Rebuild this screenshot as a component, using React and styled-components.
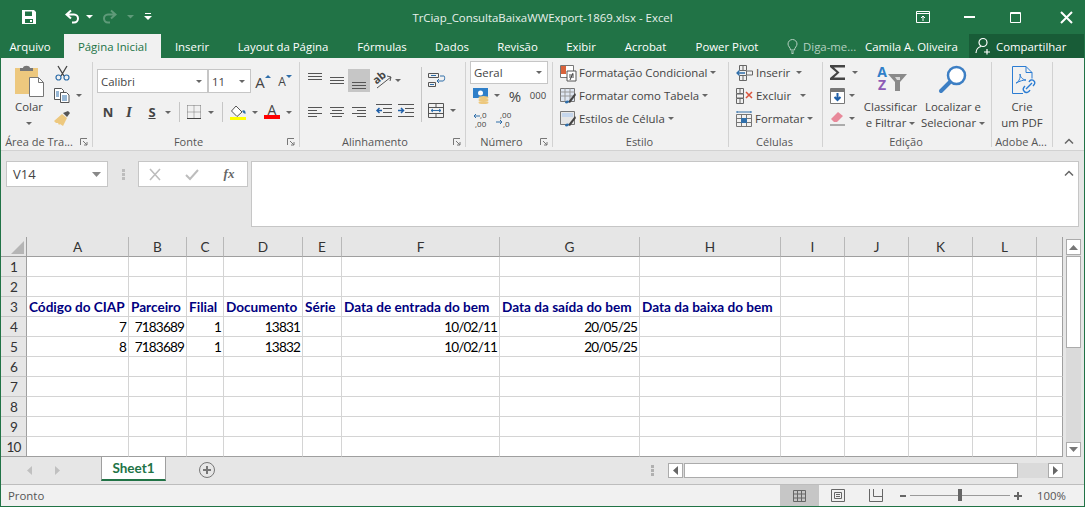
import React from "react";
import styled, { createGlobalStyle } from "styled-components";

const UI_FONT = `"Open Sans", "Noto Sans", sans-serif`;
const CELL_FONT = `Lato, "Liberation Sans", sans-serif`;
const GREEN = "#217346";

const GlobalStyle = createGlobalStyle`
  html, body { margin: 0; padding: 0; background: #fff; }
  body { font-family: ${UI_FONT}; font-size: 11.4px; color: #444; }
  svg { display: block; flex: none; overflow: visible; }
`;

const Window = styled.div`
  width: 1085px;
  height: 507px;
  box-sizing: border-box;
  border: 1px solid ${GREEN};
  border-top: none;
  display: flex;
  flex-direction: column;
  overflow: hidden;
  background: #e6e6e6;
`;

/* title bar */
const TitleBar = styled.div`
  height: 34px;
  flex: none;
  background: ${GREEN};
  display: grid;
  grid-template-columns: 1fr auto 1fr;
  align-items: center;
  color: #fff;
`;
const QuickAccess = styled.div`
  display: flex;
  align-items: center;
  padding-left: 20px;
`;
const TitleTool = styled.div`
  width: ${(p) => p.$w}px;
  margin-left: ${(p) => p.$ml || 0}px;
  display: flex;
  justify-content: center;
`;
const WindowTitle = styled.div`
  color: #e8f1ec;
`;
const WindowControls = styled.div`
  display: flex;
  justify-content: flex-end;
  align-items: center;
`;
const ControlButton = styled.div`
  width: 46px;
  box-sizing: border-box;
  padding-left: ${(p) => p.$pl || 0}px;
  display: flex;
  justify-content: center;
`;

/* tabs */
const TabBar = styled.div`
  height: 24px;
  flex: none;
  background: ${GREEN};
  display: flex;
  align-items: stretch;
  color: #fff;
`;
const Tab = styled.div`
  width: ${(p) => p.$w}px;
  box-sizing: border-box;
  padding-right: ${(p) => p.$pr || 0}px;
  display: flex;
  align-items: center;
  justify-content: center;
  white-space: nowrap;
  background: ${(p) => (p.$active ? "#f1f1f1" : "transparent")};
  color: ${(p) => (p.$active ? GREEN : "#fff")};
`;
const TellMe = styled.div`
  width: 92px;
  box-sizing: border-box;
  display: flex;
  align-items: center;
  gap: 5px;
  padding-left: 14px;
  color: #b5d0c1;
  white-space: nowrap;
`;
const UserName = styled.div`
  width: 104px;
  display: flex;
  align-items: center;
  white-space: nowrap;
`;
const ShareButton = styled.div`
  flex: 1;
  background: #185c37;
  display: flex;
  align-items: center;
  gap: 4px;
  padding-left: 6px;
`;

/* ribbon */
const Ribbon = styled.div`
  height: 93px;
  flex: none;
  box-sizing: border-box;
  background: #f1f1f1;
  border-bottom: 1px solid #d2d2d2;
  display: flex;
  padding-top: 2px;
`;
const Group = styled.div`
  position: relative;
  width: ${(p) => p.$w}px;
  flex: none;
  display: flex;
  flex-direction: column;
  &::after {
    content: "";
    position: absolute;
    top: 2px;
    bottom: 3px;
    right: 0;
    width: 1px;
    background: #d2d2d2;
  }
`;
const GroupBody = styled.div`
  height: 74px;
  flex: none;
  box-sizing: border-box;
  padding: 1px 0 0 ${(p) => p.$pl || 0}px;
  display: flex;
`;
const GroupLabel = styled.div`
  height: 12px;
  line-height: 16px;
  display: flex;
  color: #555;
  font-size: 11px;
`;
const LabelText = styled.div`
  flex: 1;
  padding-right: 3px;
  text-align: center;
  white-space: nowrap;
`;
const Launcher = styled.div`
  width: 9px;
  margin: 4px 4px 0 0;
`;
const Stack = styled.div`
  display: flex;
  flex-direction: column;
  padding-top: ${(p) => p.$pt || 0}px;
`;
const Row = styled.div`
  height: ${(p) => p.$h || 23}px;
  margin-top: ${(p) => p.$mt || 0}px;
  display: flex;
  align-items: center;
  gap: ${(p) => p.$gap || 0}px;
  white-space: nowrap;
  color: #444;
`;
const Tool = styled.div`
  width: ${(p) => p.$w}px;
  height: ${(p) => p.$h || 22}px;
  flex: none;
  display: flex;
  align-items: center;
  justify-content: center;
  background: ${(p) => (p.$active ? "#c6c6c6" : "transparent")};
  color: #444;
`;
const Caret = styled.span`
  flex: none;
  display: block;
  width: 0;
  height: 0;
  margin-left: ${(p) => p.$ml || 0}px;
  margin-right: ${(p) => p.$mr || 0}px;
  border-left: 3px solid transparent;
  border-right: 3px solid transparent;
  border-top: 3px solid #666;
`;
const VSep = styled.div`
  width: 1px;
  height: ${(p) => p.$h}px;
  flex: none;
  margin: ${(p) => p.$mt || 0}px ${(p) => p.$mr || 0}px 0 ${(p) => p.$ml || 0}px;
  background: #c6c6c6;
`;
const ComboBox = styled.div`
  width: ${(p) => p.$w}px;
  height: ${(p) => p.$h}px;
  flex: none;
  box-sizing: border-box;
  margin-left: ${(p) => p.$ml || 0}px;
  background: #fff;
  border: 1px solid #c6c6c6;
  display: flex;
  align-items: center;
  justify-content: space-between;
  padding: 0 5px 0 3px;
  color: #444;
`;
const BigButton = styled.div`
  width: ${(p) => p.$w}px;
  flex: none;
  margin-left: ${(p) => p.$ml || 0}px;
  display: flex;
  flex-direction: column;
  align-items: center;
  padding-top: ${(p) => p.$pt || 4}px;
  color: #444;
`;
const BigIcon = styled.div`
  height: ${(p) => p.$h}px;
  padding-left: ${(p) => p.$pl || 0}px;
  display: flex;
  justify-content: center;
`;
const BigText = styled.div`
  height: 16px;
  line-height: 16px;
  display: flex;
  align-items: center;
  white-space: nowrap;
`;
const Collapse = styled.div`
  flex: 1;
  display: flex;
  justify-content: center;
  align-items: flex-start;
  padding-top: 78px;
`;
const SmallDigits = styled.span`
  font-size: 9.5px;
`;
const BoldGlyph = styled.span`
  font-size: 13px;
  font-weight: 700;
  text-decoration: ${(p) => (p.$under ? "underline" : "none")};
`;
const ItalicGlyph = styled.span`
  font-family: "Liberation Serif", serif;
  font-style: italic;
  font-weight: 700;
  font-size: 15px;
`;
const Percent = styled.span`
  font-size: 15px;
`;
const SizeGlyph = styled.span`
  font-size: ${(p) => p.$size}px;
  line-height: 14px;
  margin-top: 2px;
  color: #444;
`;
const SizeArrow = styled.span`
  flex: none;
  align-self: flex-start;
  margin-top: 5px;
  width: 0;
  height: 0;
  border-left: 3px solid transparent;
  border-right: 3px solid transparent;
  border-top: ${(p) => (p.$down ? "3px solid #2f6ea9" : "none")};
  border-bottom: ${(p) => (p.$down ? "none" : "3px solid #2f6ea9")};
`;
const ColorGlyph = styled.div`
  width: 16px;
  display: flex;
  flex-direction: column;
  align-items: center;
  font-size: 14px;
  line-height: 10px;
  color: #444;
  &::after {
    content: "";
    display: block;
    width: 16px;
    height: 4px;
    background: ${(p) => p.$color};
  }
`;
const SortLetters = styled.div`
  display: flex;
  flex-direction: column;
  align-items: center;
  width: 11px;
  font-size: 14px;
  font-weight: 700;
  line-height: 13px;
`;
const SortLetter = styled.span`
  color: ${(p) => p.$color};
`;

/* formula bar */
const FormulaBar = styled.div`
  height: 86px;
  flex: none;
  box-sizing: border-box;
  padding: 10px 5px 0 5px;
  display: flex;
  align-items: flex-start;
  background: #e6e6e6;
`;
const NameBox = styled.div`
  width: 102px;
  height: 26px;
  box-sizing: border-box;
  background: #fff;
  border: 1px solid #c6c6c6;
  display: flex;
  align-items: center;
  justify-content: space-between;
  padding: 0 6px 0 6px;
  font-size: 13px;
  color: #444;
`;
const Grip = styled.div`
  width: 30px;
  height: 26px;
  display: flex;
  align-items: center;
  justify-content: center;
`;
const FormulaButtons = styled.div`
  width: 110px;
  height: 26px;
  box-sizing: border-box;
  background: #fff;
  border: 1px solid #c6c6c6;
  display: flex;
  align-items: center;
  padding-left: 9px;
  gap: 23px;
`;
const FxGlyph = styled.span`
  font-family: "Liberation Serif", serif;
  font-style: italic;
  font-weight: 700;
  font-size: 13px;
  color: #666;
`;
const FormulaInput = styled.div`
  width: 828px;
  height: 66px;
  margin-left: 3px;
  box-sizing: border-box;
  background: #fff;
  border: 1px solid #c6c6c6;
  display: flex;
  justify-content: flex-end;
  padding: 8px 4px 0 0;
`;

/* sheet */
const SheetArea = styled.div`
  height: 220px;
  flex: none;
  display: flex;
`;
const Grid = styled.div`
  display: grid;
  grid-template-columns: 26px 102px 58px 37px 79px 39px 158px 140px 141px 64px 64px 64px 64px 26px;
  grid-auto-rows: 20px;
  background: #fff;
  font-family: ${CELL_FONT};
  font-size: 13.6px;
`;
const Corner = styled.div`
  box-sizing: border-box;
  background: #e6e6e6;
  border-right: 1px solid #9f9f9f;
  border-bottom: 1px solid #9f9f9f;
  display: flex;
  align-items: flex-end;
  justify-content: flex-end;
  padding: 0 2px 2px 0;
`;
const ColHead = styled.div`
  box-sizing: border-box;
  background: #e6e6e6;
  border-right: 1px solid ${(p) => (p.$last ? "#9f9f9f" : "#b8b8b8")};
  border-bottom: 1px solid #9f9f9f;
  display: flex;
  align-items: center;
  justify-content: center;
  color: #333;
`;
const RowHead = styled.div`
  box-sizing: border-box;
  background: #e6e6e6;
  border-right: 1px solid #9f9f9f;
  border-bottom: 1px solid ${(p) => (p.$last ? "#9f9f9f" : "#c6c6c6")};
  display: flex;
  align-items: center;
  justify-content: center;
  letter-spacing: -0.8px;
  color: #333;
`;
const Cell = styled.div`
  box-sizing: border-box;
  border-right: 1px solid ${(p) => (p.$lastCol ? "#9f9f9f" : "#d4d4d4")};
  border-bottom: 1px solid ${(p) => (p.$lastRow ? "#9f9f9f" : "#d4d4d4")};
  display: flex;
  align-items: center;
  justify-content: ${(p) => (p.$right ? "flex-end" : "flex-start")};
  padding: 0 2px;
  white-space: nowrap;
  letter-spacing: ${(p) => (p.$right ? "-0.85px" : "0")};
  color: ${(p) => (p.$head ? "#000080" : "#000")};
  font-weight: ${(p) => (p.$head ? 700 : 400)};
`;
const VScroll = styled.div`
  width: 21px;
  flex: none;
  box-sizing: border-box;
  padding: 2px 3px 0 3px;
  display: flex;
  flex-direction: column;
  background: #e6e6e6;
`;
const VTrack = styled.div`
  width: 15px;
  flex: 1;
  display: flex;
  flex-direction: column;
  background: #dadada;
`;
const ScrollBtn = styled.div`
  height: ${(p) => p.$h}px;
  flex: none;
  box-sizing: border-box;
  background: #fff;
  border: 1px solid #ababab;
  display: flex;
  align-items: center;
  justify-content: center;
`;
const VThumb = styled.div`
  height: 92px;
  box-sizing: border-box;
  background: #fff;
  border: 1px solid #ababab;
  margin-top: 1px;
`;
const Spacer = styled.div`
  flex: 1;
`;

/* sheet tabs */
const SheetTabs = styled.div`
  height: 28px;
  flex: none;
  box-sizing: border-box;
  border-bottom: 1px solid #bdbdbd;
  display: flex;
  align-items: flex-start;
  background: #e6e6e6;
`;
const TabNav = styled.div`
  width: 100px;
  height: 27px;
  box-sizing: border-box;
  padding-left: 26px;
  display: flex;
  align-items: center;
  gap: 23px;
`;
const SheetTab = styled.div`
  width: 65px;
  height: 24px;
  box-sizing: border-box;
  background: #fff;
  border-left: 1px solid #9f9f9f;
  border-right: 1px solid #9f9f9f;
  border-bottom: 2px solid ${GREEN};
  display: flex;
  align-items: center;
  justify-content: center;
  color: ${GREEN};
  font-weight: 700;
  font-family: ${CELL_FONT};
  font-size: 13.5px;
`;
const AddSheet = styled.div`
  margin: 5px 0 0 33px;
`;
const ScrollGrip = styled.div`
  margin: 8px 14px 0 auto;
`;
const HScroll = styled.div`
  width: 395px;
  height: 15px;
  margin: 6px 21px 0 0;
  display: flex;
  background: #dadada;
`;
const HBtn = styled.div`
  width: 15px;
  flex: none;
  box-sizing: border-box;
  background: #fff;
  border: 1px solid #ababab;
  display: flex;
  align-items: center;
  justify-content: center;
`;
const HThumb = styled.div`
  width: 334px;
  box-sizing: border-box;
  background: #fff;
  border: 1px solid #ababab;
  margin-left: 1px;
`;

/* status bar */
const StatusBar = styled.div`
  flex: 1;
  background: #f1f1f1;
  display: flex;
  align-items: stretch;
  padding-left: 7px;
  color: #555;
`;
const StatusText = styled.div`
  flex: 1;
  display: flex;
  align-items: center;
`;
const ViewBtn = styled.div`
  width: ${(p) => p.$w}px;
  display: flex;
  align-items: center;
  justify-content: center;
  background: ${(p) => (p.$active ? "#c6c6c6" : "transparent")};
`;
const ZoomControl = styled.div`
  width: 135px;
  display: flex;
  align-items: center;
  padding-left: 4px;
  box-sizing: border-box;
`;
const ZoomTrack = styled.div`
  position: relative;
  width: 100px;
  height: 1px;
  margin: 0 4px 0 3px;
  background: #9a9a9a;
`;
const ZoomThumb = styled.div`
  position: absolute;
  left: 48px;
  top: -6px;
  width: 4px;
  height: 12px;
  background: #666;
`;
const ZoomLevel = styled.div`
  width: 54px;
  display: flex;
  align-items: center;
  padding-left: 7px;
  box-sizing: border-box;
`;

/* icons */
const TitleCaret = ({ dim }) => (
  <svg width="7" height="4" viewBox="0 0 7 4"><path d="M0 0h7L3.500 3.500z" fill={dim ? "#5f9a79" : "#fff"} /></svg>
);
const SaveIcon = () => (
  <svg width="16" height="16" viewBox="0 0 16 16"><path fillRule="evenodd" fill="#fff" d="M1 1h12l2 2v12H1zM4 2.500V7h7V2.500zM4 10v4h8v-4zM9 11h2v2H9z" /></svg>
);
const UndoIcon = ({ dim }) => (
  <svg width="16" height="16" viewBox="0 0 16 16" fill="none" stroke={dim ? "#5f9a79" : "#fff"} strokeWidth="2">
    {dim ? <path d="M9 1.500l4.500 4L9 9.500M13 5.500H6C3.500 5.500 2 7.500 2 9.500s1.500 4 4 4h2" /> : <path d="M7 1.500l-4.500 4L7 9.500M3 5.500h7c2.500 0 4 2 4 4s-1.500 4-4 4H8" />}
  </svg>
);
const CustomizeIcon = () => (
  <svg width="8" height="8" viewBox="0 0 8 8" fill="#fff"><path d="M1 0h6v1H1zM0 3h8L4 7z" /></svg>
);
const RibbonDisplayIcon = () => (
  <svg width="14" height="12" viewBox="0 0 14 12" fill="none" stroke="#fff"><path d="M.5.500h13v11H.5zM.5 2.500h13M7 10V5M5 7l2-2 2 2" /></svg>
);
const MinIcon = () => <svg width="11" height="2" viewBox="0 0 11 2"><path d="M0 0h11v2H0z" fill="#fff" /></svg>;
const MaxIcon = () => (
  <svg width="11" height="11" viewBox="0 0 11 11" fill="none" stroke="#fff"><path d="M.5.500h10v10H.5zM.5 1.500h10" /></svg>
);
const CloseIcon = () => (
  <svg width="13" height="13" viewBox="0 0 13 13" stroke="#fff" strokeWidth="2"><path d="M1 1l11 11M12 1L1 12" /></svg>
);
const BulbIcon = () => (
  <svg width="11" height="15" viewBox="0 0 11 15" fill="none" stroke="#b5d0c1"><path d="M3.500 11C3.500 8.500 1 7.500 1 5a4.500 4.500 0 019 0c0 2.500-2.500 3.500-2.500 6zM4 13h3M4.500 14.500h2" /></svg>
);
const ShareIcon = () => (
  <svg width="17" height="18" viewBox="0 0 17 18" fill="none" stroke="#fff" strokeWidth="1.200"><circle cx="8" cy="5.500" r="4" /><path d="M1 16c0-3.500 2.500-6 5-6.500M12 12v5.500M9 15h6" /></svg>
);

const PasteIcon = () => (
  <svg width="29" height="32" viewBox="0 0 29 32">
    <path d="M0 3h23v26H0z" fill="#edc87e" />
    <path d="M5 3h3c0-3 7-3 7 0h3v3H5z" fill="#777" />
    <path d="M14.500 12.500h9l5 5v14h-14z" fill="#fff" stroke="#777" />
    <path d="M23.500 12.500v5h5" fill="none" stroke="#777" />
  </svg>
);
const ScissorsIcon = () => (
  <svg width="15" height="16" viewBox="0 0 15 16" fill="none">
    <path d="M3 1l6 10M12 1L6 11" stroke="#444" strokeWidth="1.300" />
    <circle cx="3.500" cy="12.500" r="2.500" stroke="#2f6ea9" strokeWidth="1.200" />
    <circle cx="11.500" cy="12.500" r="2.500" stroke="#2f6ea9" strokeWidth="1.200" />
  </svg>
);
const CopyIcon = () => (
  <svg width="16" height="15" viewBox="0 0 16 15" fill="#fff" stroke="#555">
    <path d="M.5.500h7l2 2v9h-9z" />
    <path d="M6.500 4.500h6l2.500 2.500v7.500H6.500z" />
    <path d="M8 8h5M8 10h5M8 12h5" stroke="#2f6ea9" fill="none" />
    <path d="M2 4h3M2 6h3M2 8h3" stroke="#2f6ea9" fill="none" />
  </svg>
);
const BrushIcon = () => (
  <svg width="16" height="15" viewBox="0 0 16 15">
    <path d="M9 2l5-2 2 2-3 4z" fill="#555" />
    <path d="M0 10l8-7 5 4-4 8-3-2-1 1-1-2-2 0z" fill="#edc87e" />
  </svg>
);
const BorderIcon = () => (
  <svg width="14" height="14" viewBox="0 0 14 14" fill="none" stroke="#777" strokeDasharray="1 1"><path d="M.5.500h13M.5 7h13M.5.500v13M7 .5v13M13.500.5v13" /><path d="M0 13.500h14" stroke="#444" strokeDasharray="none" /></svg>
);
const FillIcon = () => (
  <svg width="16" height="15" viewBox="0 0 16 15">
    <path d="M6 1l6 6-5 4.500L1.500 6z" fill="#fff" stroke="#555" />
    <path d="M12 6c2-2 4 0 3.500 3l-2-1z" fill="#2f6ea9" />
    <path d="M0 12h16v3H0z" fill="#ffff00" />
  </svg>
);
const Lines = ({ rows, w = 14 }) => (
  <svg width={w} height="16" viewBox={`0 0 ${w} 16`} stroke="#555">
    <path d={rows} fill="none" />
  </svg>
);
const OrientIcon = () => (
  <svg width="18" height="17" viewBox="0 0 18 17" fill="none" stroke="#555"><path d="M3 16L17 5M13 4l4 1-1 4" /><text x="0" y="10" fontSize="11" fontWeight="700" fontFamily="Open Sans" fill="#444" stroke="none" transform="rotate(-40 5 8)">ab</text></svg>
);
const WrapIcon = () => (
  <svg width="18" height="15" viewBox="0 0 18 15" fill="none" stroke="#555"><path d="M.5.500h10v4H.5zM.5 9.500h7v4h-7z" /><path d="M3 2.500h5M2 11.500h4" stroke="#2f6ea9" /><path d="M12 3h4c1 0 1 5-1 5H9M11 6L9 8l2 2" stroke="#2f6ea9" /></svg>
);
const MergeIcon = () => (
  <svg width="16" height="15" viewBox="0 0 16 15" fill="#fff" stroke="#555"><path d="M.5.500h15v14H.5z" fill="none" /><path d="M.5 4.500h15M.5 10.500h15M8 .5v4M8 10.500v4" fill="none" /><path d="M3 7.500h10M3 7.500l2-1.500M3 7.500l2 1.500M13 7.500L11 6M13 7.500l-2 1.500" stroke="#2f6ea9" fill="none" /></svg>
);
const IndentIcon = ({ out }) => (
  <svg width="16" height="13" viewBox="0 0 16 13" fill="none" stroke="#555">
    <path d="M0 .5h16M7 4.500h9M7 8.500h9M0 12.500h16" />
    <path d={out ? "M6 6.500H1M3.500 4L1 6.500 3.500 9" : "M0 6.500h5M3 4l2.500 2.500L3 9"} stroke="#1f5fa8" strokeWidth="1.500" />
  </svg>
);
const CurrencyIcon = () => (
  <svg width="16" height="16" viewBox="0 0 16 16">
    <path d="M0 0h15v10H0z" fill="#2f7fc9" />
    <circle cx="7.500" cy="5" r="2.500" fill="#fff" />
    <ellipse cx="10.500" cy="9.500" rx="5" ry="1.500" fill="#edc87e" />
    <ellipse cx="10.500" cy="12" rx="5" ry="1.500" fill="#edc87e" />
    <ellipse cx="10.500" cy="14.500" rx="5" ry="1.500" fill="#edc87e" />
  </svg>
);
const DecimalIcon = ({ dec }) => (
  <svg width="15" height="16" viewBox="0 0 15 16" fontFamily="Open Sans" fontSize="8" fill="#444">
    <text x={dec ? 4 : 7} y="6">{dec ? ",00" : ",0"}</text>
    <text x={dec ? 7 : 2} y="15">{dec ? ",0" : ",00"}</text>
    <path d={dec ? "M0 10h6M4 8l2 2-2 2" : "M7 4H1M3 2L1 4l2 2"} stroke="#2f6ea9" fill="none" />
  </svg>
);
const CondFormatIcon = () => (
  <svg width="16" height="16" viewBox="0 0 16 16">
    <path d="M.5.500h13v12H.5z" fill="#fff" stroke="#777" />
    <path d="M1 1h5v4H1zM1 5h5v4H1z" fill="#d9633b" />
    <path d="M7 6h9v10H7z" fill="#fff" stroke="#555" />
    <path d="M9 10h5M9 12h5M13 8l-3 7" stroke="#444" />
  </svg>
);
const TableFormatIcon = () => (
  <svg width="16" height="16" viewBox="0 0 16 16">
    <path d="M.5.500h14v13H.5z" fill="#dfe7f2" stroke="#777" />
    <path d="M.5 4h14M.5 8h14M5 .5v13M10 .5v13" stroke="#999" fill="none" />
    <path d="M8 14l7-9 1 2-6 8z" fill="#444" />
    <path d="M5 15c0-3 3-3 4-2 0 2-2 3-4 2z" fill="#2f6ea9" />
  </svg>
);
const CellStyleIcon = () => (
  <svg width="16" height="16" viewBox="0 0 16 16">
    <path d="M.5.500h14v13H.5z" fill="#e6e6e6" stroke="#777" />
    <path d="M2 2h11v4H2z" fill="#c5d6ec" />
    <path d="M8 14l7-9 1 2-6 8z" fill="#444" />
    <path d="M5 15c0-3 3-3 4-2 0 2-2 3-4 2z" fill="#2f6ea9" />
  </svg>
);
const InsertCellsIcon = () => (
  <svg width="17" height="16" viewBox="0 0 17 16" fill="none" stroke="#666">
    <path d="M3.500.500h7v5h-7zM3.500 10.500h7v5h-7zM7 .5v5M7 10.500v5M10.500 6h6v4h-6z" />
    <path d="M9 8H1M3.500 5.500L1 8l2.500 2.500" stroke="#2f6ea9" strokeWidth="1.300" />
  </svg>
);
const DeleteCellsIcon = () => (
  <svg width="17" height="16" viewBox="0 0 17 16" fill="none" stroke="#666">
    <path d="M.5.500h7v5h-7zM.5 10.500h7v5h-7zM4 .5v5M4 10.500v5" />
    <path d="M10 4l6 6M16 4l-6 6" stroke="#d9533b" strokeWidth="1.500" />
    <path d="M.5 6h7v4h-7z" />
  </svg>
);
const FormatCellsIcon = () => (
  <svg width="16" height="16" viewBox="0 0 16 16" fill="none" stroke="#777">
    <path d="M.5 3.500h15v12H.5zM.5 7.500h15M.5 11.500h15M5.500 3.500v12M10.500 3.500v12" />
    <path d="M1 0v2M15 0v2M1 1h14" stroke="#2f6ea9" />
    <path d="M5 7h6v5H5z" fill="#2f6ea9" stroke="none" />
  </svg>
);
const SumIcon = () => (
  <svg width="16" height="15" viewBox="0 0 16 15"><path d="M0 0h15v2.500H4l5.500 5L4 12.500h11V15H0v-2l6.500-5.500L0 2z" fill="#444" /></svg>
);
const FillDownIcon = () => (
  <svg width="15" height="16" viewBox="0 0 15 16">
    <path d="M.5.500h14v15H.5z" fill="#fff" stroke="#777" />
    <path d="M1 1h13v3H1z" fill="#777" />
    <path d="M7.500 5v7M4.500 9l3 3 3-3" stroke="#1f5fa8" strokeWidth="2" fill="none" />
  </svg>
);
const EraserIcon = () => (
  <svg width="15" height="15" viewBox="0 0 15 15">
    <path d="M1 8l7-7 5 4-6 6H4z" fill="#e8899a" />
    <path d="M0 14h15" stroke="#666" />
  </svg>
);
const FunnelIcon = () => (
  <svg width="20" height="18" viewBox="0 0 20 18" style={{ marginTop: 9 }}>
    <path d="M0 0h19l-7 8v9H7V8z" fill="#8a8a8a" />
    <path d="M7 3h5v3H9z" fill="#d9d9d9" />
  </svg>
);
const SearchIcon = () => (
  <svg width="28" height="28" viewBox="0 0 28 28" fill="none">
    <circle cx="17.500" cy="10.500" r="8.500" stroke="#3d7fc4" strokeWidth="2.500" fill="#fff" />
    <path d="M11 17L2 26" stroke="#3d7fc4" strokeWidth="4" strokeLinecap="round" />
  </svg>
);
const PdfIcon = () => (
  <svg width="26" height="29" viewBox="0 0 26 29" fill="none" stroke="#2b7cd3">
    <path d="M12 27.500H1.500V.5H15l6 6v6" />
    <path d="M15 .5v6h6" />
    <path d="M5 17c2 0 5-5 4-9 0 3 3 6 6 6-3 0-6 1-10 3z" />
    <path d="M15 23l6-6M13 25c-2-2 0-4 1-5M23 15c2 2 0 4-1 5M13 25c2 3 5 1 6-1M23 15c-2-2-4-1-5 1" strokeWidth="1.400" />
  </svg>
);
const ChevronUp = () => (
  <svg width="10" height="6" viewBox="0 0 10 6" fill="none" stroke="#666" strokeWidth="1.500"><path d="M1 5.500l4-4 4 4" /></svg>
);
const LauncherIcon = () => (
  <svg width="8" height="8" viewBox="0 0 8 8" fill="none" stroke="#777"><path d="M.5 7V.5H7M3 3l4 4M7 4v3H4" /></svg>
);
const GripIcon = ({ color = "#bdbdbd" }) => (
  <svg width="3" height="11" viewBox="0 0 3 11" fill={color}><path d="M0 0h3v3H0zM0 4h3v3H0zM0 8h3v3H0z" /></svg>
);
const CancelIcon = () => (
  <svg width="12" height="11" viewBox="0 0 12 11" stroke="#bdbdbd" strokeWidth="1.600"><path d="M1 0l10 11M11 0L1 11" /></svg>
);
const EnterIcon = () => (
  <svg width="14" height="11" viewBox="0 0 14 11" fill="none" stroke="#bdbdbd" strokeWidth="2"><path d="M1 6l4 4 8-9" /></svg>
);
const CornerTriangle = () => (
  <svg width="13" height="13" viewBox="0 0 13 13"><path d="M13 0v13H0z" fill="#b5b5b5" /></svg>
);
const Arrow = ({ dir, color = "#777" }) => {
  const d = { up: "M0 5h9L4.500 0z", down: "M0 0h9L4.500 5z", left: "M5 0v9L0 4.500z", right: "M0 0v9l5-4.500z" }[dir];
  const vertical = dir === "up" || dir === "down";
  return (
    <svg width={vertical ? 9 : 5} height={vertical ? 5 : 9} viewBox={vertical ? "0 0 9 5" : "0 0 5 9"}><path d={d} fill={color} /></svg>
  );
};
const AddIcon = () => (
  <svg width="16" height="16" viewBox="0 0 16 16" fill="none" stroke="#777"><circle cx="8" cy="8" r="7.500" /><path d="M4 8h8M8 4v8" strokeWidth="2" /></svg>
);
const NormalViewIcon = () => (
  <svg width="13" height="12" viewBox="0 0 13 12" fill="none" stroke="#666"><path d="M.5.500h12v11H.5zM.5 4h12M.5 8h12M4.500.5v11M8.500.5v11" /></svg>
);
const PageViewIcon = () => (
  <svg width="14" height="13" viewBox="0 0 14 13" fill="none" stroke="#666"><path d="M.5.500h13v12H.5zM3.500 3.500h7v6h-7zM5 5.500h4M5 7.500h4" /></svg>
);
const BreakViewIcon = () => (
  <svg width="14" height="13" viewBox="0 0 14 13" fill="none" stroke="#666"><path d="M.5 0v12.500h13V0M4.500 0v7.500h9" /></svg>
);
const ZoomSign = ({ plus }) => (
  <svg width="8" height="8" viewBox="0 0 8 8"><path d={plus ? "M0 3h8v2H0zM3 0h2v8H3z" : "M1 3h6v2H1z"} fill="#666" /></svg>
);

const ALIGN = {
  top: "M0 .5h14M0 3.500h14M0 6.500h14",
  middle: "M0 4.500h14M0 7.500h14M0 10.500h14",
  bottom: "M3 9.500h14M3 12.500h14M3 15.500h14",
  left: "M0 4.500h14M0 7.500h9M0 10.500h14M0 13.500h9",
  center: "M0 4.500h14M2 7.500h10M0 10.500h14M2 13.500h10",
  right: "M0 4.500h14M5 7.500h9M0 10.500h14M5 13.500h9",
};

/* sheet data */
const COLS = ["A", "B", "C", "D", "E", "F", "G", "H", "I", "J", "K", "L", ""];
const HEADINGS = ["Código do CIAP", "Parceiro", "Filial", "Documento", "Série", "Data de entrada do bem", "Data da saída do bem", "Data da baixa do bem"];
const ROWS = {
  3: { head: true, values: HEADINGS },
  4: { values: ["7", "7183689", "1", "13831", "", "10/02/11", "20/05/25", ""] },
  5: { values: ["8", "7183689", "1", "13832", "", "10/02/11", "20/05/25", ""] },
};

const Sheet = () => {
  const cells = [];
  for (let r = 1; r <= 10; r++) {
    const row = ROWS[r];
    cells.push(
      <RowHead key={`h${r}`} $last={r === 10}>
        {r}
      </RowHead>
    );
    COLS.forEach((c, i) => {
      cells.push(
        <Cell
          key={`${r}-${i}`}
          $head={row && row.head}
          $right={row && !row.head}
          $lastCol={i === COLS.length - 1}
          $lastRow={r === 10}
        >
          {row && row.values[i]}
        </Cell>
      );
    });
  }
  return (
    <Grid>
      <Corner>
        <CornerTriangle />
      </Corner>
      {COLS.map((c, i) => (
        <ColHead key={i} $last={i === COLS.length - 1}>
          {c}
        </ColHead>
      ))}
      {cells}
    </Grid>
  );
};

const RibbonGroup = ({ w, pl, label, launcher, children }) => (
  <Group $w={w}>
    <GroupBody $pl={pl}>{children}</GroupBody>
    <GroupLabel>
      <LabelText>{label}</LabelText>
      {launcher && (
        <Launcher>
          <LauncherIcon />
        </Launcher>
      )}
    </GroupLabel>
  </Group>
);

const App = () => (
  <Window>
    <GlobalStyle />
    <TitleBar>
      <QuickAccess>
        <SaveIcon />
        <TitleTool $w={28} $ml={21}>
          <UndoIcon />
        </TitleTool>
        <TitleCaret />
        <TitleTool $w={34}>
          <UndoIcon dim />
        </TitleTool>
        <TitleCaret dim />
        <TitleTool $w={28}>
          <CustomizeIcon />
        </TitleTool>
      </QuickAccess>
      <WindowTitle>TrCiap_ConsultaBaixaWWExport-1869.xlsx - Excel</WindowTitle>
      <WindowControls>
        <ControlButton>
          <RibbonDisplayIcon />
        </ControlButton>
        <ControlButton>
          <MinIcon />
        </ControlButton>
        <ControlButton>
          <MaxIcon />
        </ControlButton>
        <ControlButton $pl={10}>
          <CloseIcon />
        </ControlButton>
      </WindowControls>
    </TitleBar>

    <TabBar>
      <Tab $w={63} $pr={5}>Arquivo</Tab>
      <Tab $w={97} $active>Página Inicial</Tab>
      <Tab $w={62}>Inserir</Tab>
      <Tab $w={120}>Layout da Página</Tab>
      <Tab $w={78}>Fórmulas</Tab>
      <Tab $w={62}>Dados</Tab>
      <Tab $w={69}>Revisão</Tab>
      <Tab $w={58}>Exibir</Tab>
      <Tab $w={71}>Acrobat</Tab>
      <Tab $w={92}>Power Pivot</Tab>
      <TellMe>
        <BulbIcon />
        Diga-me...
      </TellMe>
      <UserName>Camila A. Oliveira</UserName>
      <ShareButton>
        <ShareIcon />
        Compartilhar
      </ShareButton>
    </TabBar>

    <Ribbon>
      <RibbonGroup w={92} label="Área de Tra..." launcher>
        <BigButton $w={50} $ml={3}>
          <BigIcon $h={34}>
            <PasteIcon />
          </BigIcon>
          <BigText>Colar</BigText>
          <BigText>
            <Caret />
          </BigText>
        </BigButton>
        <Stack>
          <Row>
            <Tool $w={16}><ScissorsIcon /></Tool>
          </Row>
          <Row>
            <Tool $w={16}><CopyIcon /></Tool>
            <Caret $ml={6} />
          </Row>
          <Row>
            <Tool $w={16}><BrushIcon /></Tool>
          </Row>
        </Stack>
      </RibbonGroup>

      <RibbonGroup w={207} pl={4} label="Fonte" launcher>
        <Stack $pt={8}>
          <Row $h={24}>
            <ComboBox $w={111} $h={24}>
              Calibri
              <Caret />
            </ComboBox>
            <ComboBox $w={43} $h={24}>
              11
              <Caret />
            </ComboBox>
            <Tool $w={24}>
              <SizeGlyph $size={15}>A</SizeGlyph>
              <SizeArrow />
            </Tool>
            <Tool $w={20}>
              <SizeGlyph $size={12}>A</SizeGlyph>
              <SizeArrow $down />
            </Tool>
          </Row>
          <Row $h={20} $mt={9}>
            <Tool $w={22}><BoldGlyph>N</BoldGlyph></Tool>
            <Tool $w={20}><ItalicGlyph>I</ItalicGlyph></Tool>
            <Tool $w={26}><BoldGlyph $under>S</BoldGlyph></Tool>
            <Caret />
            <VSep $h={20} $ml={8} />
            <Tool $w={28}><BorderIcon /></Tool>
            <Caret />
            <VSep $h={20} $ml={8} />
            <Tool $w={29}><FillIcon /></Tool>
            <Caret />
            <Tool $w={28}><ColorGlyph $color="#ff0000">A</ColorGlyph></Tool>
            <Caret />
          </Row>
        </Stack>
      </RibbonGroup>

      <RibbonGroup w={166} pl={4} label="Alinhamento" launcher>
        <Stack $pt={8}>
          <Row>
            <Tool $w={22}><Lines rows={ALIGN.top} /></Tool>
            <Tool $w={22}><Lines rows={ALIGN.middle} /></Tool>
            <Tool $w={22} $h={23} $active><Lines rows={ALIGN.bottom} w={20} /></Tool>
            <Tool $w={25}><OrientIcon /></Tool>
            <Caret />
          </Row>
          <Row $mt={7}>
            <Tool $w={22}><Lines rows={ALIGN.left} /></Tool>
            <Tool $w={22}><Lines rows={ALIGN.center} /></Tool>
            <Tool $w={22}><Lines rows={ALIGN.right} /></Tool>
            <Tool $w={28}><IndentIcon out /></Tool>
            <Tool $w={16}><IndentIcon /></Tool>
          </Row>
        </Stack>
        <VSep $h={55} $mt={6} $ml={7} />
        <Stack $pt={8}>
          <Row>
            <Tool $w={30}><WrapIcon /></Tool>
          </Row>
          <Row $mt={7}>
            <Tool $w={28}><MergeIcon /></Tool>
            <Caret />
          </Row>
        </Stack>
      </RibbonGroup>

      <RibbonGroup w={87} pl={4} label="Número" launcher>
        <Stack>
          <ComboBox $w={78} $h={23}>
            Geral
            <Caret />
          </ComboBox>
          <Row>
            <Tool $w={22}><CurrencyIcon /></Tool>
            <Tool $w={2} />
            <Caret />
            <Tool $w={30}><Percent>%</Percent></Tool>
            <Tool $w={16}><SmallDigits>000</SmallDigits></Tool>
          </Row>
          <Row $mt={1}>
            <Tool $w={20}><DecimalIcon /></Tool>
            <Tool $w={26}><DecimalIcon dec /></Tool>
          </Row>
        </Stack>
      </RibbonGroup>

      <RibbonGroup w={176} pl={7} label="Estilo">
        <Stack>
          <Row $gap={3}>
            <CondFormatIcon />
            Formatação Condicional
            <Caret />
          </Row>
          <Row $gap={3}>
            <TableFormatIcon />
            Formatar como Tabela
            <Caret />
          </Row>
          <Row $gap={3}>
            <CellStyleIcon />
            Estilos de Célula
            <Caret />
          </Row>
        </Stack>
      </RibbonGroup>

      <RibbonGroup w={94} pl={7} label="Células">
        <Stack>
          <Row $gap={3}>
            <InsertCellsIcon />
            Inserir
            <Caret $ml={3} />
          </Row>
          <Row $gap={3}>
            <DeleteCellsIcon />
            Excluir
            <Caret $ml={6} />
          </Row>
          <Row $gap={3}>
            <FormatCellsIcon />
            Formatar
            <Caret />
          </Row>
        </Stack>
      </RibbonGroup>

      <RibbonGroup w={169} pl={7} label="Edição">
        <Stack>
          <Row>
            <SumIcon />
            <Caret $ml={6} />
          </Row>
          <Row>
            <FillDownIcon />
            <Caret $ml={4} />
          </Row>
          <Row>
            <EraserIcon />
            <Caret $ml={4} />
          </Row>
        </Stack>
        <BigButton $w={57} $ml={4} $pt={4}>
          <BigIcon $h={34} $pl={3}>
            <SortLetters>
              <SortLetter $color="#2f7fc9">A</SortLetter>
              <SortLetter $color="#8e5bb5">Z</SortLetter>
            </SortLetters>
            <FunnelIcon />
          </BigIcon>
          <BigText>Classificar</BigText>
          <BigText>
            e Filtrar
            <Caret $ml={3} />
          </BigText>
        </BigButton>
        <BigButton $w={62} $ml={3} $pt={4}>
          <BigIcon $h={34}>
            <SearchIcon />
          </BigIcon>
          <BigText>Localizar e</BigText>
          <BigText>
            Selecionar
            <Caret $ml={3} />
          </BigText>
        </BigButton>
      </RibbonGroup>

      <RibbonGroup w={61} label="Adobe A...">
        <BigButton $w={60} $pt={5}>
          <BigIcon $h={33} $pl={3}>
            <PdfIcon />
          </BigIcon>
          <BigText>Crie</BigText>
          <BigText>um PDF</BigText>
        </BigButton>
      </RibbonGroup>

      <Collapse>
        <ChevronUp />
      </Collapse>
    </Ribbon>

    <FormulaBar>
      <NameBox>
        V14
        <Arrow dir="down" color="#888" />
      </NameBox>
      <Grip>
        <GripIcon />
      </Grip>
      <FormulaButtons>
        <Tool $w={14}><CancelIcon /></Tool>
        <Tool $w={14}><EnterIcon /></Tool>
        <Tool $w={14}><FxGlyph>fx</FxGlyph></Tool>
      </FormulaButtons>
      <FormulaInput>
        <ChevronUp />
      </FormulaInput>
    </FormulaBar>

    <SheetArea>
      <Sheet />
      <VScroll>
        <VTrack>
          <ScrollBtn $h={16}><Arrow dir="up" /></ScrollBtn>
          <VThumb />
          <Spacer />
          <ScrollBtn $h={15}><Arrow dir="down" /></ScrollBtn>
        </VTrack>
      </VScroll>
    </SheetArea>

    <SheetTabs>
      <TabNav>
        <Arrow dir="left" color="#c0c0c0" />
        <Arrow dir="right" color="#c0c0c0" />
      </TabNav>
      <SheetTab>Sheet1</SheetTab>
      <AddSheet>
        <AddIcon />
      </AddSheet>
      <ScrollGrip>
        <GripIcon color="#b0b0b0" />
      </ScrollGrip>
      <HScroll>
        <HBtn><Arrow dir="left" color="#666" /></HBtn>
        <HThumb />
        <Spacer />
        <HBtn><Arrow dir="right" color="#666" /></HBtn>
      </HScroll>
    </SheetTabs>

    <StatusBar>
      <StatusText>Pronto</StatusText>
      <ViewBtn $w={39} $active><NormalViewIcon /></ViewBtn>
      <ViewBtn $w={38}><PageViewIcon /></ViewBtn>
      <ViewBtn $w={38}><BreakViewIcon /></ViewBtn>
      <ZoomControl>
        <ZoomSign />
        <ZoomTrack>
          <ZoomThumb />
        </ZoomTrack>
        <ZoomSign plus />
      </ZoomControl>
      <ZoomLevel>100%</ZoomLevel>
    </StatusBar>
  </Window>
);

export default App;
